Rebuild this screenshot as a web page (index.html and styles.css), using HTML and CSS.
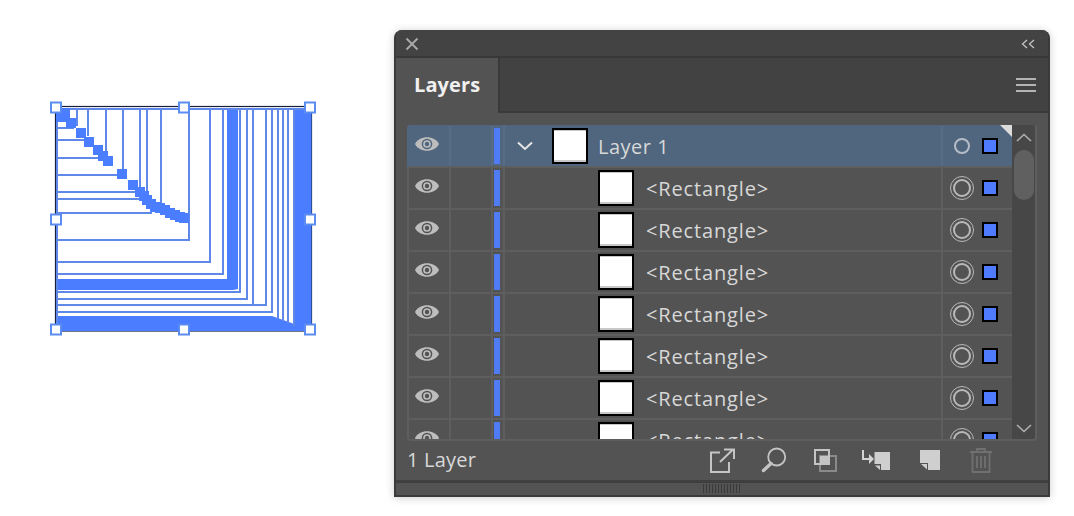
FILE: index.html
```html
<!DOCTYPE html>
<html lang="en">
<head>
    <meta charset="UTF-8">
    <meta name="viewport" content="width=device-width, initial-scale=1.0">
    <title>Layers</title>
    <link rel="stylesheet" href="styles.css">
</head>
<body>
    <svg width="0" height="0" class="defs">
        <symbol id="eye" viewBox="0 0 24 14">
            <path d="M0 7C4 -2 20 -2 24 7C20 16 4 16 0 7Z" fill="#bdbdbd"/>
            <circle cx="12" cy="7" r="4.6" fill="#bdbdbd" stroke="currentColor" stroke-width="1.5"/>
            <circle cx="12" cy="7" r="2.2" fill="currentColor"/>
        </symbol>
        <symbol id="thumb" viewBox="0 0 36 36">
            <rect width="36" height="36" fill="#000"/>
            <rect x="2" y="2" width="32" height="32" fill="#c8c8c8"/>
            <rect x="2" y="3" width="32" height="29" fill="#fff"/>
        </symbol>
    </svg>

    <!-- Artwork on the canvas -->
    <svg class="art" width="394" height="516" viewBox="0 0 394 516">
        <rect x="55.5" y="106.5" width="256" height="224.5" fill="#fff" stroke="#16203c" stroke-width="1.2"/>
        <g fill="#4a7dff">
            <rect x="227" y="109" width="11" height="176"/>
            <rect x="57" y="279" width="176" height="11"/>
            <path d="M230 279L238 279L238 289L233 290Z"/>
            <rect x="295" y="108" width="16.5" height="222"/>
            <path d="M56 316L272 316L300 326L311 331L56 331Z"/>
        </g>
        <g fill="none" stroke="#5f88e8" stroke-width="2">
            <path d="M56 109H311M57 107V330"/>
            <path d="M77 109V126M88 109V136M106 109V158M123 109V175M140 109V190M147 109V195M161 109V206"/>
            <path d="M57 128H74M57 140H88M57 158H102M57 175H118M57 192H136M57 199H142M57 213H152"/>
            <path d="M57 240H189V214M57 262H210V109M57 274H223V109M189 109V214"/>
            <path d="M57 292H240V109M57 299H247V109M57 305H266V109M57 312H272V109"/>
            <path d="M253 109V305M278 109V319M283 109V321M288 109V323M294 109V326"/>
        </g>
        <g fill="#4a7dff">
            <rect x="56" y="108" width="14" height="14"/>
            <rect x="66" y="118" width="10" height="10"/>
            <rect x="76" y="128" width="10" height="10"/>
            <rect x="84" y="137" width="10" height="10"/>
            <rect x="93" y="145" width="10" height="10"/>
            <rect x="98" y="151" width="10" height="10"/>
            <rect x="103" y="156" width="10" height="10"/>
            <rect x="117" y="169" width="10" height="10"/>
            <rect x="128" y="180" width="10" height="10"/>
            <rect x="135" y="187" width="10" height="10"/>
            <rect x="139" y="191" width="10" height="10"/>
            <rect x="142" y="195" width="10" height="10"/>
            <rect x="146" y="199" width="10" height="10"/>
            <rect x="150" y="202" width="10" height="10"/>
            <rect x="155" y="203" width="10" height="10"/>
            <rect x="160" y="205" width="10" height="10"/>
            <rect x="165" y="208" width="10" height="10"/>
            <rect x="170" y="210" width="10" height="10"/>
            <rect x="175" y="212" width="10" height="10"/>
            <rect x="179" y="213" width="10" height="10"/>
        </g>
        <g fill="#fff" stroke="#5b8cf2" stroke-width="2">
            <rect x="51" y="102.5" width="10" height="10"/>
            <rect x="179" y="102.5" width="10" height="10"/>
            <rect x="305" y="102.5" width="10" height="10"/>
            <rect x="51" y="214.5" width="10" height="10"/>
            <rect x="305" y="214.5" width="10" height="10"/>
            <rect x="51" y="324.5" width="10" height="10"/>
            <rect x="179" y="324.5" width="10" height="10"/>
            <rect x="305" y="324.5" width="10" height="10"/>
        </g>
    </svg>

    <!-- Layers panel -->
    <div class="panel">
        <div class="titlebar">
            <svg class="close" width="14" height="14" viewBox="0 0 14 14"><path d="M1.5 1.5L12.5 12.5M12.5 1.5L1.5 12.5" stroke="#a8a8a8" stroke-width="2" fill="none"/></svg>
            <svg class="collapse" width="14" height="10" viewBox="0 0 14 10"><path d="M6 1L1.5 5L6 9M13 1L8.5 5L13 9" stroke="#c4c4c4" stroke-width="1.3" fill="none"/></svg>
        </div>
        <div class="tabbar">
            <div class="tab">Layers</div>
            <div class="menu"><span></span><span></span><span></span></div>
        </div>
        <div class="list">
            <div class="rows">
                <div class="row selected">
                    <div class="cell eye"><svg width="24" height="14"><use href="#eye"/></svg></div>
                    <div class="cell lock"></div>
                    <div class="cell color"><span class="bar"></span></div>
                    <div class="cell name top">
                        <svg class="twirl" width="16" height="10" viewBox="0 0 16 10"><path d="M1 1.5L8 8L15 1.5" stroke="#e6e6e6" stroke-width="2" fill="none"/></svg>
                        <svg class="thumb" width="36" height="36"><use href="#thumb"/></svg>
                        <span class="label">Layer 1</span>
                    </div>
                    <div class="cell target">
                        <span class="ring small"></span>
                        <span class="swatch"></span>
                    </div>
                    <span class="corner"></span>
                </div>
                <div class="row">
                    <div class="cell eye"><svg width="24" height="14"><use href="#eye"/></svg></div>
                    <div class="cell lock"></div>
                    <div class="cell color"><span class="bar"></span></div>
                    <div class="cell name"><svg class="thumb" width="36" height="36"><use href="#thumb"/></svg><span class="label">&lt;Rectangle&gt;</span></div>
                    <div class="cell target"><span class="ring"></span><span class="swatch"></span></div>
                </div>
                <div class="row">
                    <div class="cell eye"><svg width="24" height="14"><use href="#eye"/></svg></div>
                    <div class="cell lock"></div>
                    <div class="cell color"><span class="bar"></span></div>
                    <div class="cell name"><svg class="thumb" width="36" height="36"><use href="#thumb"/></svg><span class="label">&lt;Rectangle&gt;</span></div>
                    <div class="cell target"><span class="ring"></span><span class="swatch"></span></div>
                </div>
                <div class="row">
                    <div class="cell eye"><svg width="24" height="14"><use href="#eye"/></svg></div>
                    <div class="cell lock"></div>
                    <div class="cell color"><span class="bar"></span></div>
                    <div class="cell name"><svg class="thumb" width="36" height="36"><use href="#thumb"/></svg><span class="label">&lt;Rectangle&gt;</span></div>
                    <div class="cell target"><span class="ring"></span><span class="swatch"></span></div>
                </div>
                <div class="row">
                    <div class="cell eye"><svg width="24" height="14"><use href="#eye"/></svg></div>
                    <div class="cell lock"></div>
                    <div class="cell color"><span class="bar"></span></div>
                    <div class="cell name"><svg class="thumb" width="36" height="36"><use href="#thumb"/></svg><span class="label">&lt;Rectangle&gt;</span></div>
                    <div class="cell target"><span class="ring"></span><span class="swatch"></span></div>
                </div>
                <div class="row">
                    <div class="cell eye"><svg width="24" height="14"><use href="#eye"/></svg></div>
                    <div class="cell lock"></div>
                    <div class="cell color"><span class="bar"></span></div>
                    <div class="cell name"><svg class="thumb" width="36" height="36"><use href="#thumb"/></svg><span class="label">&lt;Rectangle&gt;</span></div>
                    <div class="cell target"><span class="ring"></span><span class="swatch"></span></div>
                </div>
                <div class="row">
                    <div class="cell eye"><svg width="24" height="14"><use href="#eye"/></svg></div>
                    <div class="cell lock"></div>
                    <div class="cell color"><span class="bar"></span></div>
                    <div class="cell name"><svg class="thumb" width="36" height="36"><use href="#thumb"/></svg><span class="label">&lt;Rectangle&gt;</span></div>
                    <div class="cell target"><span class="ring"></span><span class="swatch"></span></div>
                </div>
                <div class="row">
                    <div class="cell eye"><svg width="24" height="14"><use href="#eye"/></svg></div>
                    <div class="cell lock"></div>
                    <div class="cell color"><span class="bar"></span></div>
                    <div class="cell name"><svg class="thumb" width="36" height="36"><use href="#thumb"/></svg><span class="label">&lt;Rectangle&gt;</span></div>
                    <div class="cell target"><span class="ring"></span><span class="swatch"></span></div>
                </div>
            </div>
            <div class="scrollbar">
                <svg width="16" height="10" viewBox="0 0 16 10"><path d="M1 8L8 1.5L15 8" stroke="#b0b0b0" stroke-width="1.6" fill="none"/></svg>
                <div class="scroll-thumb"></div>
                <svg class="down" width="16" height="10" viewBox="0 0 16 10"><path d="M1 2L8 8.5L15 2" stroke="#b0b0b0" stroke-width="1.6" fill="none"/></svg>
            </div>
        </div>
        <div class="footer">
            <span class="count">1 Layer</span>
            <div class="tools">
                <svg class="t-export" width="26" height="26" viewBox="0 0 26 26"><path d="M11 5.5H2V25H20V15M11 15L24 2.5M15 2.5H25V12" stroke="#c4c4c4" stroke-width="2" fill="none"/></svg>
                <svg class="t-search" width="26" height="26" viewBox="0 0 26 26"><circle cx="15.7" cy="10" r="8.5" stroke="#c4c4c4" stroke-width="1.8" fill="none"/><path d="M10 16.5L2.5 23.5" stroke="#c4c4c4" stroke-width="3.4" stroke-linecap="round" fill="none"/></svg>
                <svg class="t-merge" width="24" height="24" viewBox="0 0 24 24"><rect x="7" y="8" width="16" height="15" stroke="#8a8a8a" stroke-width="2" fill="none"/><rect x="7" y="8" width="9" height="8" fill="#c4c4c4"/><rect x="2" y="2" width="14" height="14" stroke="#c4c4c4" stroke-width="2" fill="none"/></svg>
                <svg class="t-move" width="30" height="22" viewBox="0 0 30 22"><path d="M13.5 3H29V21H20V15H13.5Z" fill="#cfcfcf"/><path d="M14 16.5H19V21Z" fill="#cfcfcf"/><path d="M2 1V10H9" stroke="#d4d4d4" stroke-width="2" fill="none"/><path d="M8 5L13 10L8 15Z" fill="#d4d4d4"/></svg>
                <svg class="t-new" width="22" height="22" viewBox="0 0 22 22"><path d="M1 1H21V21H9V14H1Z" fill="#cfcfcf"/><path d="M2 15H8V20.5Z" fill="#cfcfcf"/></svg>
                <svg class="t-trash" width="24" height="26" viewBox="0 0 24 26"><path d="M1 5H23M8 5V2H16V5M3.5 5V25H20.5V5M8 9V21M12 9V21M16 9V21" stroke="#707070" stroke-width="1.8" fill="none"/></svg>
            </div>
        </div>
        <div class="grip"><span class="grip-lines"></span></div>
    </div>
</body>
</html>
```

FILE: styles.css
```css
/* Reset */
* {
    margin: 0;
    padding: 0;
    box-sizing: border-box;
}
body {
    background: #fff;
    display: flex;
    align-items: flex-start;
    height: 516px;
    overflow: hidden;
    font-family: 'Open Sans', sans-serif;
}
.defs {
    position: absolute;
}
.art {
    display: block;
    flex: none;
}

/* Panel */
.panel {
    width: 656px;
    height: 467px;
    margin-top: 30px;
    background: #535353;
    border: 2px solid #3a3a3a;
    border-top: none;
    border-radius: 8px 8px 0 0;
    box-shadow: 0 1px 8px rgba(0, 0, 0, 0.2);
    display: flex;
    flex-direction: column;
    overflow: hidden;
}
.titlebar {
    height: 28px;
    flex: none;
    background: #434343;
    border-bottom: 2px solid #383838;
    display: flex;
    justify-content: space-between;
    align-items: center;
    padding: 2px 13px 0 9px;
}

/* Tab strip */
.tabbar {
    height: 55px;
    flex: none;
    background: #424242;
    display: flex;
    justify-content: space-between;
    align-items: center;
    border-bottom: 2px solid #3a3a3a;
    padding-right: 12px;
}
.tab {
    width: 104px;
    height: 55px;
    margin-bottom: -2px;
    background: #535353;
    border-right: 2px solid #3a3a3a;
    color: #f0f0f0;
    font-size: 20px;
    font-weight: 700;
    line-height: 53px;
    letter-spacing: 0.1px;
    padding-left: 18px;
}
.menu {
    display: flex;
    flex-direction: column;
    gap: 4px;
}
.menu span {
    display: block;
    width: 20px;
    height: 2px;
    background: #b4b4b4;
}

/* Layer list */
.list {
    height: 316px;
    flex: none;
    margin: 12px 11px 0 11px;
    border: 2px solid #5e5e5e;
    border-width: 0 2px 2px 0;
    border-radius: 4px;
    display: flex;
    overflow: hidden;
}
.rows {
    flex: 1;
    overflow: hidden;
}
.row {
    position: relative;
    height: 42px;
    display: grid;
    grid-template-columns: 42px 42px 12px 1fr 69px;
    border-left: 2px solid #5e5e5e;
    border-bottom: 2px solid #5e5e5e;
}
.row.selected {
    height: 43px;
    padding-top: 1px;
    background: #50667e;
    border-left-color: #50667e;
}
.cell {
    display: flex;
    align-items: center;
    border-right: 2px solid #5e5e5e;
}
.row.selected .cell {
    border-color: #586d84;
}
.eye {
    justify-content: center;
    padding: 0 4px 4px 0;
    color: #535353;
}
.selected .eye {
    color: #50667e;
}
.eye svg {
    display: block;
}
.color {
    padding-left: 1px;
}
.bar {
    display: block;
    width: 6px;
    height: 36px;
    background: #4f7cf5;
}
.name {
    padding-left: 93px;
}
.name.top {
    padding-left: 12px;
}
.twirl {
    margin-right: 19px;
}
.thumb {
    flex: none;
    display: block;
}
.label {
    color: #d8d8d8;
    font-size: 20px;
    font-weight: 500;
    letter-spacing: 0.85px;
    margin-left: 12px;
}
.name.top .label {
    margin-left: 10px;
    letter-spacing: 0.5px;
}
.target {
    border-right: none;
    gap: 8px;
    padding-left: 7px;
}
.ring {
    width: 24px;
    height: 24px;
    flex: none;
    border-radius: 50%;
    border: 1.5px solid #b9b9b9;
    display: flex;
    align-items: center;
    justify-content: center;
}
.ring::before {
    content: "";
    display: block;
    width: 14px;
    height: 14px;
    border-radius: 50%;
    border: 2px solid #b9b9b9;
}
.ring.small {
    width: 16px;
    height: 16px;
    margin: 0 4px;
    border: 2px solid #b4bdc8;
}
.ring.small::before {
    display: none;
}
.swatch {
    width: 16px;
    height: 16px;
    flex: none;
    background: #4f7cff;
    border: 2px solid #000;
}
.corner {
    position: absolute;
    top: 0;
    right: 0;
    border-top: 12px solid #dcdcdc;
    border-left: 12px solid transparent;
}

/* Scrollbar */
.scrollbar {
    width: 23px;
    flex: none;
    background: #474747;
    display: flex;
    flex-direction: column;
    align-items: center;
    padding-top: 8px;
}
.scroll-thumb {
    width: 20px;
    height: 50px;
    margin-top: 7px;
    background: #606060;
    border-radius: 10px;
}
.scrollbar .down {
    margin-top: auto;
    margin-bottom: 6px;
}

/* Footer */
.footer {
    height: 39px;
    flex: none;
    display: flex;
    align-items: center;
    justify-content: space-between;
    padding: 0 55px 2px 11px;
}
.count {
    color: #d8d8d8;
    font-size: 20px;
    font-weight: 500;
    letter-spacing: 0.2px;
}
.tools {
    display: flex;
    align-items: center;
}
.t-search { margin-left: 26px; }
.t-merge { margin-left: 26px; }
.t-move { margin-left: 24px; }
.t-new { margin-left: 28px; }
.t-trash { margin-left: 28px; }

/* Bottom grip */
.grip {
    flex: 1;
    border-top: 3px solid #3f3f3f;
    display: flex;
    justify-content: center;
}
.grip-lines {
    display: block;
    width: 38px;
    height: 9px;
    margin-top: 1px;
    background: repeating-linear-gradient(90deg, #3a3a3a 0 1px, #535353 1px 3px);
}
```
